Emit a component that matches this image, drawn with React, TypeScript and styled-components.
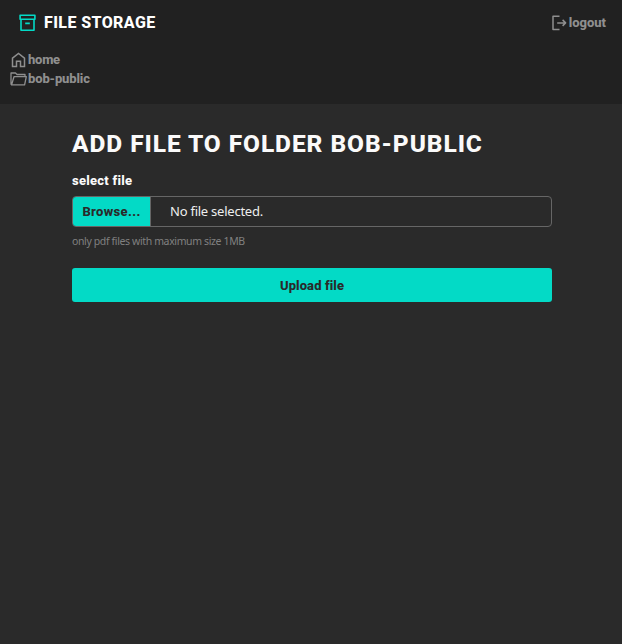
import React from "react";
import styled, { createGlobalStyle } from "styled-components";

const GlobalStyle = createGlobalStyle`
  * { box-sizing: border-box; }
  html, body, #root { height: 100%; }
  body { margin: 0; background: #2a2a2a; }
`;

const display = `"Roboto", "Liberation Sans", sans-serif`;

const Page = styled.div`
  min-height: 100%;
  background: #2a2a2a;
  font-family: ${display};
  color: #fafafa;
`;

const Header = styled.header`
  height: 104px;
  background: #212121;
`;

const TopBar = styled.div`
  display: flex;
  justify-content: space-between;
  height: 45px;
  padding: 0 16px 0 19px;
`;

const Brand = styled.a`
  display: flex;
  align-items: center;
  gap: 8px;
  color: #03dac6;
`;

const Label = styled.span<{ $size?: number; $spacing?: number }>`
  font-weight: 800;
  font-size: ${(p) => p.$size ?? 13}px;
  letter-spacing: ${(p) => p.$spacing ?? 0}px;
  line-height: 18px;
  white-space: nowrap;
`;

const BrandName = styled(Label)`
  padding-top: 1px;
  color: #fff;
`;

const NavLink = styled.a`
  display: flex;
  align-items: center;
  gap: 1px;
  height: 19px;
  color: #8f8f8f;
`;

const Logout = styled(NavLink)`
  height: 45px;
`;

const Crumbs = styled.nav`
  padding: 5px 10px;
`;

const Icon = styled.svg`
  display: block;
  flex: none;
  fill: none;
  stroke: currentColor;
`;

const Form = styled.form`
  width: 480px;
  margin: 0 70px 0 72px;
  padding-top: 25px;
  display: flex;
  flex-direction: column;
`;

const Title = styled.h1`
  margin: 0;
  font-size: 24.5px;
  line-height: 30px;
  font-weight: 800;
  letter-spacing: 0.93px;
  white-space: nowrap;
`;

const FieldLabel = styled(Label)`
  margin-top: 13px;
`;

const FileField = styled.div`
  display: flex;
  height: 31px;
  margin-top: 6px;
  border: 1px solid #666;
  border-radius: 4px;
  overflow: hidden;
`;

const Browse = styled.span`
  display: flex;
  align-items: center;
  justify-content: center;
  width: 78px;
  background: #03dac6;
  color: #2a2a2a;
  border-right: 1px solid #666;
`;

const FileName = styled.span`
  padding-left: 19px;
  font: 13px/29px "Noto Sans", sans-serif;
  letter-spacing: -0.24px;
  color: #eee;
`;

const Hint = styled.small`
  margin-top: 6px;
  font: 10.5px/16px "Noto Sans", sans-serif;
  letter-spacing: -0.37px;
  color: #808080;
  white-space: nowrap;
`;

const Submit = styled.button`
  height: 34px;
  margin-top: 19px;
  padding: 2px 0 0;
  border: 0;
  border-radius: 3px;
  background: #03dac6;
  color: #2a2a2a;
  font-family: inherit;
`;

const ArchiveIcon = () => (
  <Icon width="17" height="18" viewBox="0 0 17 18" strokeWidth="1.6" strokeLinejoin="round">
    <path d="M1.1 1.2h14.8v4H1.1zM2 5.2v11.1h13V5.2M6.2 9.4h4.6" />
  </Icon>
);

const LogoutIcon = () => (
  <Icon width="16" height="16" viewBox="0 0 16 16" strokeWidth="1.5" strokeLinejoin="round">
    <path d="M7.5 1.2H1v13.3h6.5M5.2 7.9h8.4M10.6 4.9l3 3-3 3" />
  </Icon>
);

const HomeIcon = () => (
  <Icon width="17" height="16" viewBox="0 0 17 16" strokeWidth="1.5">
    <path d="M2.5 6.2 8.5 1.4l6 4.8v8.3h-4V9.2h-4v5.3h-4z" />
  </Icon>
);

const FolderIcon = () => (
  <Icon width="17" height="14" viewBox="0 0 17 14" strokeWidth="1.3" strokeLinejoin="round">
    <path d="M1 12.8V1h4.5L7 2.5h8v2.2M1 12.8h13.6l1.7-8.1H4L1.6 12.8" />
  </Icon>
);

export default function App() {
  return (
    <Page>
      <GlobalStyle />
      <Header>
        <TopBar>
          <Brand>
            <ArchiveIcon />
            <BrandName $size={16} $spacing={0.4}>FILE STORAGE</BrandName>
          </Brand>
          <Logout>
            <LogoutIcon />
            <Label>logout</Label>
          </Logout>
        </TopBar>
        <Crumbs>
          <NavLink>
            <HomeIcon />
            <Label $spacing={-0.25}>home</Label>
          </NavLink>
          <NavLink>
            <FolderIcon />
            <Label $spacing={-0.13}>bob-public</Label>
          </NavLink>
        </Crumbs>
      </Header>
      <Form>
        <Title>ADD FILE TO FOLDER BOB-PUBLIC</Title>
        <FieldLabel $spacing={0.25}>select file</FieldLabel>
        <FileField>
          <Browse>
            <Label $spacing={0.35}>Browse...</Label>
          </Browse>
          <FileName>No file selected.</FileName>
        </FileField>
        <Hint>only pdf files with maximum size 1MB</Hint>
        <Submit type="button">
          <Label $spacing={0.1}>Upload file</Label>
        </Submit>
      </Form>
    </Page>
  );
}
